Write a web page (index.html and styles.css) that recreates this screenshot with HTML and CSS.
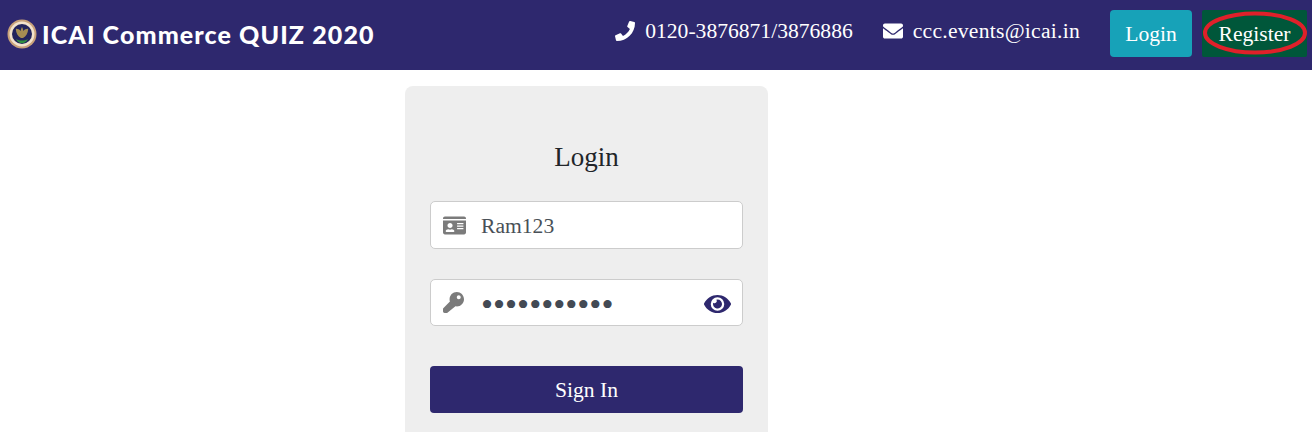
FILE: index.html
```html
<!DOCTYPE html>
<html lang="en">
<head>
<meta charset="utf-8">
<title>ICAI Commerce QUIZ 2020</title>
<link rel="stylesheet" href="styles.css">
</head>
<body>
<header class="topbar">
  <a class="brand" href="#">
    <svg class="brand-logo" viewBox="0 0 30 30" aria-hidden="true">
      <circle cx="15" cy="15" r="14.500" fill="#c9a27a"/>
      <circle cx="15" cy="15" r="12.500" fill="#f3e3cc"/>
      <circle cx="15" cy="15" r="10" fill="#23245c"/>
      <path d="M15 8c.8 1.500 1.200 2.500 1.200 4 1.500-1.500 3.800-2.500 5-2-.3 4-2 7.500-5.200 9h-2c-3.200-1.500-4.900-5-5.200-9 1.200-.5 3.500.5 5 2 0-1.500.4-2.500 1.200-4z" fill="#a58d52"/>
      <path d="M9 20c3.500 2 8.500 2 12 0-1.500 3-4 4.200-6 4.200S10.500 23 9 20z" fill="#2f8f3f"/>
    </svg>
    <span class="brand-name">ICAI Commerce QUIZ 2020</span>
  </a>
  <nav class="contact">
    <span class="contact-item">
      <svg class="contact-icon" viewBox="0 0 512 512" aria-hidden="true"><path d="M493.4 24.600l-104-24c-11.300-2.600-22.900 3.300-27.500 13.900l-48 112c-4.200 9.800-1.400 21.300 6.900 28l60.600 49.600c-36 76.700-98.900 140.500-177.200 177.200l-49.600-60.600c-6.800-8.300-18.200-11.100-28-6.900l-112 48C3.900 366.500-2 378.100.6 389.400l24 104C27.100 504.200 36.700 512 48 512c256.100 0 464-207.500 464-464 0-11.200-7.700-20.900-18.600-23.400z"/></svg>
      0120-3876871/3876886
    </span>
    <span class="contact-item contact-email">
      <svg class="contact-icon" viewBox="0 0 512 512" aria-hidden="true"><path d="M502.300 190.800c3.900-3.100 9.700-.2 9.700 4.700V400c0 26.500-21.500 48-48 48H48c-26.500 0-48-21.500-48-48V195.600c0-5 5.700-7.800 9.700-4.700 22.400 17.400 52.100 39.500 154.100 113.600 21.100 15.400 56.700 47.800 92.200 47.600 35.700.3 72-32.800 92.300-47.600 102-74.100 131.600-96.300 154-113.700zM256 320c23.200.4 56.600-29.200 73.400-41.400 132.700-96.300 142.800-104.700 173.400-128.700 5.800-4.500 9.200-11.500 9.200-18.900v-19c0-26.500-21.500-48-48-48H48C21.500 64 0 85.500 0 112v19c0 7.400 3.400 14.300 9.200 18.900 30.600 23.900 40.700 32.400 173.400 128.700 16.800 12.200 50.200 41.800 73.400 41.400z"/></svg>
      ccc.events@icai.in
    </span>
  </nav>
  <div class="actions">
    <a class="btn btn-login" href="#">Login</a>
    <a class="btn btn-register" href="#">Register
      <svg class="annotation" viewBox="0 0 105 47" aria-hidden="true"><ellipse cx="53" cy="23" rx="50" ry="19.500" fill="none" stroke="#e0202a" stroke-width="4"/></svg>
    </a>
  </div>
</header>
<main class="page">
  <form class="card">
    <h1 class="card-title">Login</h1>
    <label class="field field-user">
      <svg class="field-icon id-icon" viewBox="0 0 576 512" aria-hidden="true"><path d="M528 32H48C21.500 32 0 53.500 0 80v16h576V80c0-26.500-21.500-48-48-48zM0 432c0 26.500 21.500 48 48 48h480c26.500 0 48-21.500 48-48V128H0v304zm352-232c0-4.400 3.600-8 8-8h144c4.400 0 8 3.600 8 8v16c0 4.400-3.600 8-8 8H360c-4.400 0-8-3.600-8-8v-16zm0 64c0-4.400 3.600-8 8-8h144c4.400 0 8 3.600 8 8v16c0 4.400-3.600 8-8 8H360c-4.400 0-8-3.600-8-8v-16zm0 64c0-4.400 3.600-8 8-8h144c4.400 0 8 3.600 8 8v16c0 4.400-3.600 8-8 8H360c-4.400 0-8-3.600-8-8v-16zM176 192c35.300 0 64 28.700 64 64s-28.700 64-64 64-64-28.700-64-64 28.700-64 64-64zM67.100 396.200C75.500 370.500 99.600 352 128 352h8.200c12.300 5.100 25.700 8 39.800 8s27.600-2.900 39.800-8h8.200c28.400 0 52.500 18.500 60.900 44.200 3.200 9.900-5.200 19.800-15.600 19.800H82.700c-10.400 0-18.800-10-15.600-19.800z"/></svg>
      <input class="field-input" type="text" value="Ram123">
    </label>
    <label class="field field-pass">
      <svg class="field-icon key-icon" viewBox="0 0 512 512" aria-hidden="true"><path d="M512 176C512 273 433 352 336 352c-11 0-22-1-33-3L100 512H40C18 512 0 494 0 472v-60c0-6 3-12 7-17l162-162C163 214 160 195 160 176 160 79 239 0 336 0 433 0 512 79 512 176zM336 128c0 27 21 48 48 48s48-21 48-48-21-48-48-48-48 21-48 48z"/></svg>
      <input class="field-input field-secret" type="password" value="Ram12345678">
      <svg class="eye-icon" viewBox="0 0 576 512" aria-hidden="true"><path d="M572.520 241.400C518.290 135.590 410.930 64 288 64S57.680 135.640 3.480 241.410a32.350 32.350 0 0 0 0 29.190C57.710 376.410 165.070 448 288 448s230.320-71.640 284.520-177.410a32.350 32.350 0 0 0 0-29.190zM288 400a144 144 0 1 1 144-144 143.930 143.930 0 0 1-144 144zm0-240a95.310 95.310 0 0 0-25.310 3.790 47.850 47.850 0 0 1-66.900 66.900A95.780 95.780 0 1 0 288 160z"/></svg>
    </label>
    <button class="submit" type="button">Sign In</button>
  </form>
</main>
</body>
</html>
```

FILE: styles.css
```css
* { box-sizing: border-box; }
html, body { margin: 0; height: 432px; overflow: hidden; background: #fff; }
body { font-family: "Liberation Serif", "Times New Roman", serif; color: #212529; }

.topbar {
  display: flex;
  align-items: center;
  height: 70px;
  padding: 0 5px 0 7px;
  background: #2e286e;
  color: #fff;
}
.brand { display: flex; align-items: center; gap: 5px; margin-bottom: 2px; color: #fff; text-decoration: none; }
.brand-logo { width: 30px; height: 30px; }
.brand-name {
  font-family: "Lato", "Liberation Sans", sans-serif;
  font-weight: 900;
  font-size: 25px;
  letter-spacing: 1.100px;
  white-space: nowrap;
}
.contact { display: flex; align-items: center; gap: 30px; margin-left: auto; margin-top: -8px; }
.contact-item { display: flex; align-items: center; gap: 10px; font-size: 21.600px; white-space: nowrap; }
.contact-email { letter-spacing: .26px; }
.contact-icon { width: 20px; height: 20px; fill: #fff; }
.actions { display: flex; gap: 10px; margin: 0 0 3px 30px; }
.btn {
  position: relative;
  display: flex;
  align-items: center;
  justify-content: center;
  height: 47px;
  padding-top: 2px;
  color: #fff;
  font-size: 21.600px;
  text-decoration: none;
}
.btn-login { width: 82px; border-radius: 4px; background: #17a2b8; }
.btn-register { width: 105px; border-radius: 2px; background: #00573a; }
.annotation { position: absolute; inset: 0; width: 100%; height: 100%; }

.page { padding: 16px 0 0 405px; }
.card {
  display: flex;
  flex-direction: column;
  width: 363px;
  height: 346px;
  padding: 53px 25px 0;
  border-radius: 8px 8px 0 0;
  background: #eee;
}
.card-title { margin: 0 0 26px; font-size: 27px; font-weight: 400; line-height: 36px; text-align: center; color: #212529; }
.field {
  display: flex;
  align-items: center;
  flex: none;
  height: 47px;
  padding: 0 11px 0 12px;
  border: 1px solid #ccc;
  border-radius: 5px;
  background: #fff;
}
.field-user { height: 48px; margin-bottom: 30px; }
.field-pass { margin-bottom: 40px; }
.field-icon { fill: #7b7b7b; flex: none; }
.id-icon { width: 23px; height: 21px; }
.key-icon { width: 21px; height: 21px; margin-right: 2px; }
.field-input {
  flex: 1;
  min-width: 0;
  height: 100%;
  margin-left: 15px;
  padding: 2px 0 0;
  border: 0;
  outline: 0;
  background: transparent;
  font-family: inherit;
  font-size: 21.600px;
  color: #495057;
}
.field-secret { padding: 4px 0 0; font-size: 34.400px; color: #434a54; }
.eye-icon { width: 27px; height: 24px; margin-top: 2px; fill: #2e286e; flex: none; }
.submit {
  flex: none;
  height: 47px;
  padding: 2px 0 0;
  border: 0;
  border-radius: 4px;
  background: #2e286e;
  color: #fff;
  font-family: inherit;
  font-size: 21.600px;
}
```
